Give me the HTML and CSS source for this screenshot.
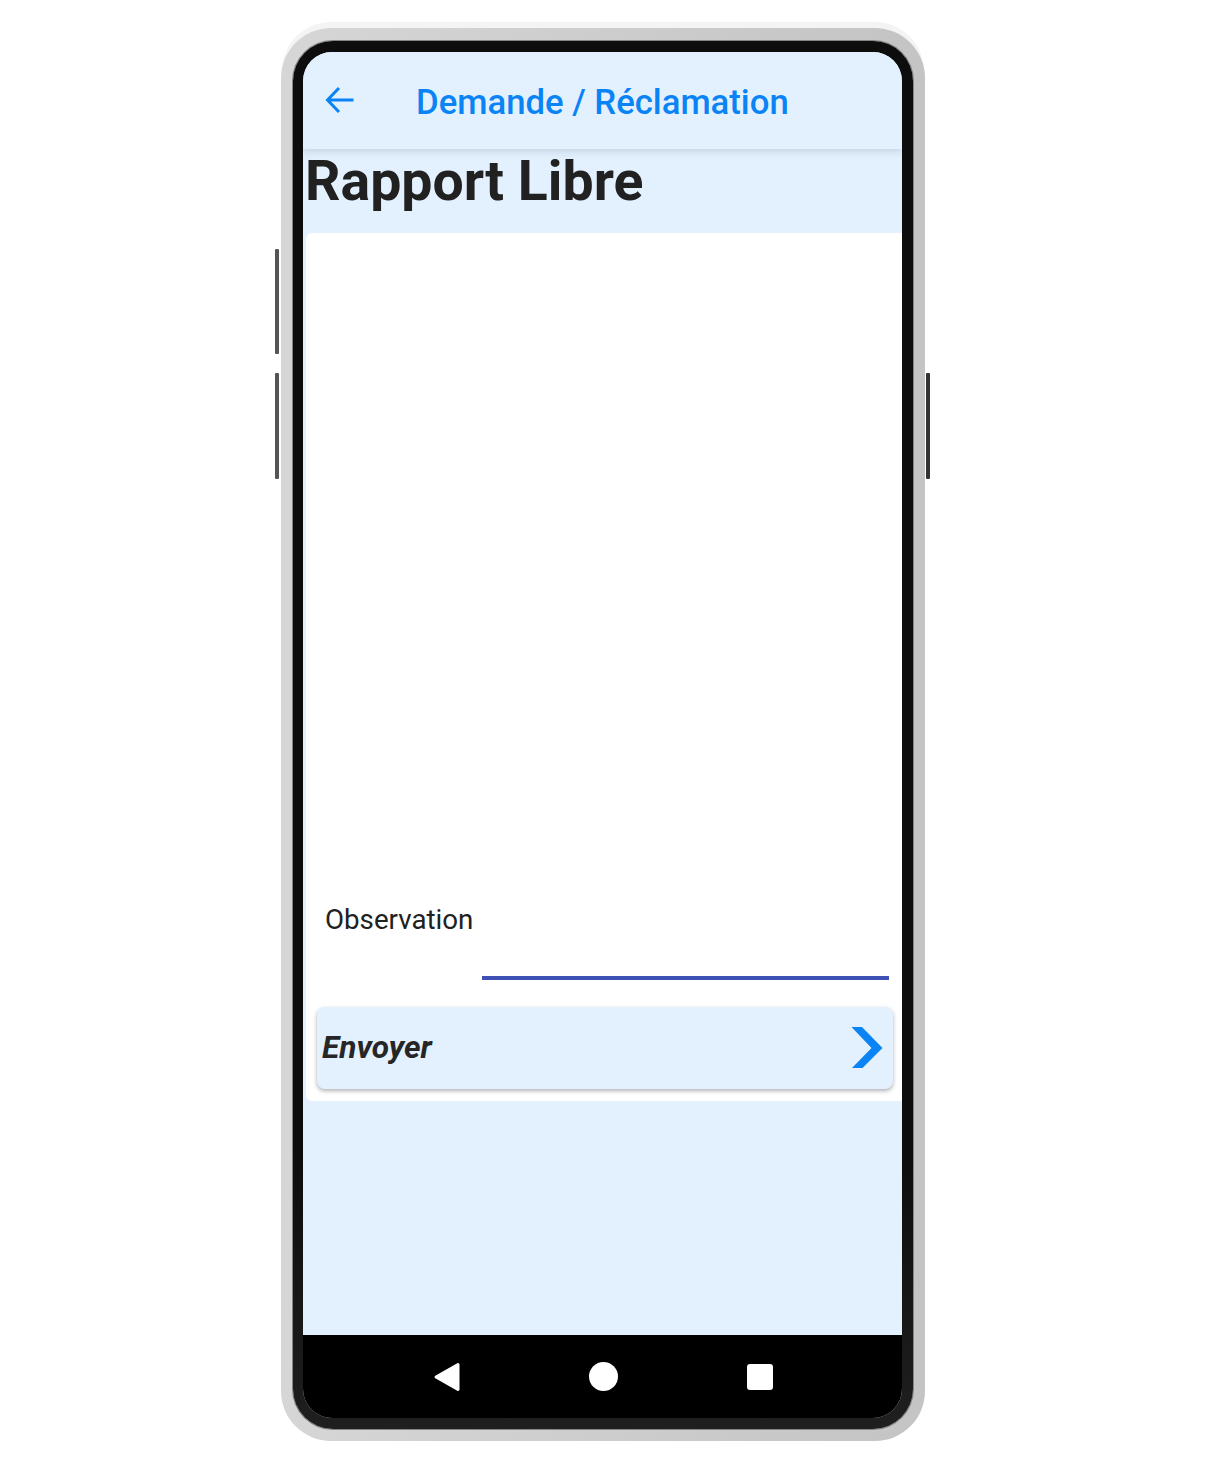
FILE: index.html
```html
<!DOCTYPE html>
<html lang="fr">
<head>
<meta charset="utf-8">
<title>Demande / Réclamation</title>
<link rel="stylesheet" href="styles.css">
</head>
<body>
<div class="stage">
  <div class="phone">
    <span class="side side-l1"></span>
    <span class="side side-l2"></span>
    <span class="side side-r"></span>
    <div class="bezel">
      <div class="screen">
        <header class="appbar">
          <svg class="back" viewBox="0 0 30 28" width="30" height="28" aria-hidden="true"><path d="M28.5 14H2.5M14 2 2.5 14 14 26" fill="none" stroke="#0a84f5" stroke-width="3"/></svg>
          <h1 class="title">Demande / Réclamation</h1>
        </header>
        <main class="content">
          <h2 class="heading">Rapport Libre</h2>
          <section class="card">
            <div class="field">
              <span class="label">Observation</span>
              <div class="underline"></div>
            </div>
            <button class="send" type="button">
              <span class="send-label">Envoyer</span>
              <svg viewBox="0 0 32 42" width="32" height="42" aria-hidden="true"><path d="M0.5 0H11L31.5 21 11.5 41H1L20.5 21Z" fill="#0a84f5"/></svg>
            </button>
          </section>
        </main>
        <nav class="navbar">
          <svg viewBox="0 0 28 30" width="28" height="30" aria-hidden="true"><path d="M25 2.5 3 15l22 12.5Z" fill="#fff" stroke="#fff" stroke-width="3" stroke-linejoin="round"/></svg>
          <span class="nav-circle"></span>
          <span class="nav-square"></span>
        </nav>
      </div>
    </div>
  </div>
</div>
</body>
</html>
```
FILE: styles.css
```css
* { box-sizing: border-box; }
html, body { margin: 0; padding: 0; background: #fff; }
body { font-family: Roboto, "Liberation Sans", sans-serif; }

.stage {
  height: 1477px;
  padding: 28px 0 0 281px;
  overflow: hidden;
}

.phone {
  position: relative;
  width: 644px;
  height: 1413px;
  padding: 13px 12px 12px 12px;
  border-radius: 50px;
  background: linear-gradient(90deg, #d6d6d6 0, #c4c4c4 100%);
  box-shadow: 0 -7px 0 -1px #f4f4f4;
}

.side {
  position: absolute;
  width: 4px;
  background: #555;
  border-radius: 1px;
}
.side-l1 { left: -6px; top: 221px; height: 105px; }
.side-l2 { left: -6px; top: 345px; height: 106px; }
.side-r { right: -5px; top: 345px; height: 106px; background: #333; }

.bezel {
  height: 100%;
  padding: 11px 11px 11px 10px;
  border-radius: 40px;
  background: linear-gradient(180deg, #0d0d0d 0, #0d0d0d 80%, #1f1f1f 100%);
  box-shadow: 0 0 0 1px #858585;
}

.screen {
  display: flex;
  flex-direction: column;
  height: 100%;
  border-radius: 29px;
  overflow: hidden;
  background: #e3f1fe;
}

.appbar {
  position: relative;
  z-index: 1;
  flex: none;
  display: flex;
  align-items: center;
  height: 97px;
  padding-left: 22px;
  background: #e3f1fe;
  box-shadow: 0 2px 8px rgba(70, 90, 120, .22);
}
.back { flex: none; margin-top: -2px; }
.title {
  margin: 3px 0 0 61px;
  font-size: 34.7px;
  line-height: 40px;
  font-weight: 500;
  color: #0a84f5;
  white-space: nowrap;
}

.content {
  flex: 1;
  min-height: 0;
}
.heading {
  height: 84px;
  margin: 0;
  padding-left: 2px;
  font-size: 55.4px;
  line-height: 65px;
  font-weight: 700;
  color: #212121;
}

.card {
  display: flex;
  flex-direction: column;
  justify-content: flex-end;
  height: 868px;
  margin-left: 3px;
  padding: 0 9px 12px 11px;
  border-radius: 6px 0 0 6px;
  background: #fff;
}

.field {
  position: relative;
  height: 102px;
}
.label {
  position: absolute;
  left: 8px;
  top: -1px;
  font-size: 27.7px;
  line-height: 32px;
  color: #212121;
}
.underline {
  position: absolute;
  left: 165px;
  right: 4px;
  top: 71px;
  height: 4px;
  background: #3f51b5;
}

.send {
  display: flex;
  align-items: center;
  justify-content: space-between;
  width: 576px;
  height: 82px;
  padding: 0 10px 0 5px;
  border: 0;
  border-radius: 8px;
  background: #e3f1fe;
  box-shadow: 0 2px 4px rgba(60, 60, 70, .4);
  font-family: inherit;
  font-size: 31.6px;
  font-style: italic;
  font-weight: 700;
  color: #262626;
}
.send-label { margin-bottom: 2px; }

.navbar {
  flex: none;
  display: flex;
  align-items: center;
  height: 83px;
  padding: 0 129px 0 130px;
  justify-content: space-between;
  background: #000;
}
.nav-circle {
  width: 29px;
  height: 29px;
  margin-right: 2px;
  border-radius: 50%;
  background: #fff;
}
.nav-square {
  width: 26px;
  height: 26px;
  border-radius: 3px;
  background: #fff;
}
```
